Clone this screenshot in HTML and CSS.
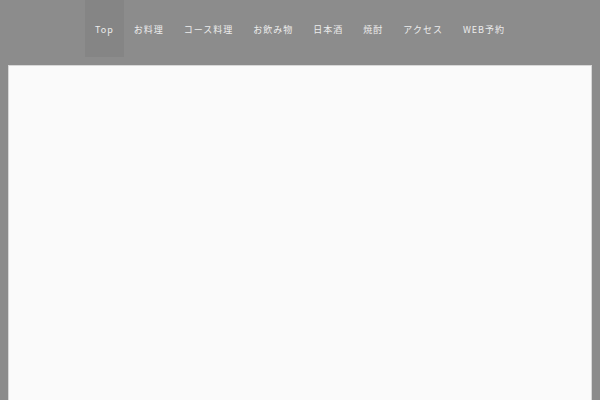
FILE: index.html
```html
<!DOCTYPE html>
<html lang="ja">
<head>
<meta charset="utf-8">
<link rel="stylesheet" href="styles.css">
</head>
<body>
<header class="site-header">
  <nav class="global-nav">
    <a class="nav-item is-current" href="#">Top</a>
    <a class="nav-item" href="#">お料理</a>
    <a class="nav-item" href="#">コース料理</a>
    <a class="nav-item" href="#">お飲み物</a>
    <a class="nav-item" href="#">日本酒</a>
    <a class="nav-item" href="#">焼酎</a>
    <a class="nav-item" href="#">アクセス</a>
    <a class="nav-item" href="#">WEB予約</a>
  </nav>
</header>
<main class="content-panel"></main>
</body>
</html>
```
FILE: styles.css
```css
html, body {
  margin: 0;
  padding: 0;
  background: #8c8c8c;
  height: 100%;
  overflow: hidden;
}
body {
  font-family: "Noto Sans CJK JP", "Noto Sans", sans-serif;
  display: flex;
  flex-direction: column;
}
.site-header {
  height: 57px;
  display: flex;
  justify-content: center;
}
.global-nav {
  display: flex;
  align-items: stretch;
}
.nav-item {
  display: flex;
  align-items: center;
  padding: 1px 10px 0 10px;
  color: #ececec;
  font-size: 9px;
  letter-spacing: 1px;
  text-decoration: none;
}
.is-current {
  background: #858585;
}
.content-panel {
  flex: 1;
  margin: 8px 8px 0 8px;
  background: #fafafa;
  border: 1px solid #d8d8d8;
  border-bottom: none;
}
```
